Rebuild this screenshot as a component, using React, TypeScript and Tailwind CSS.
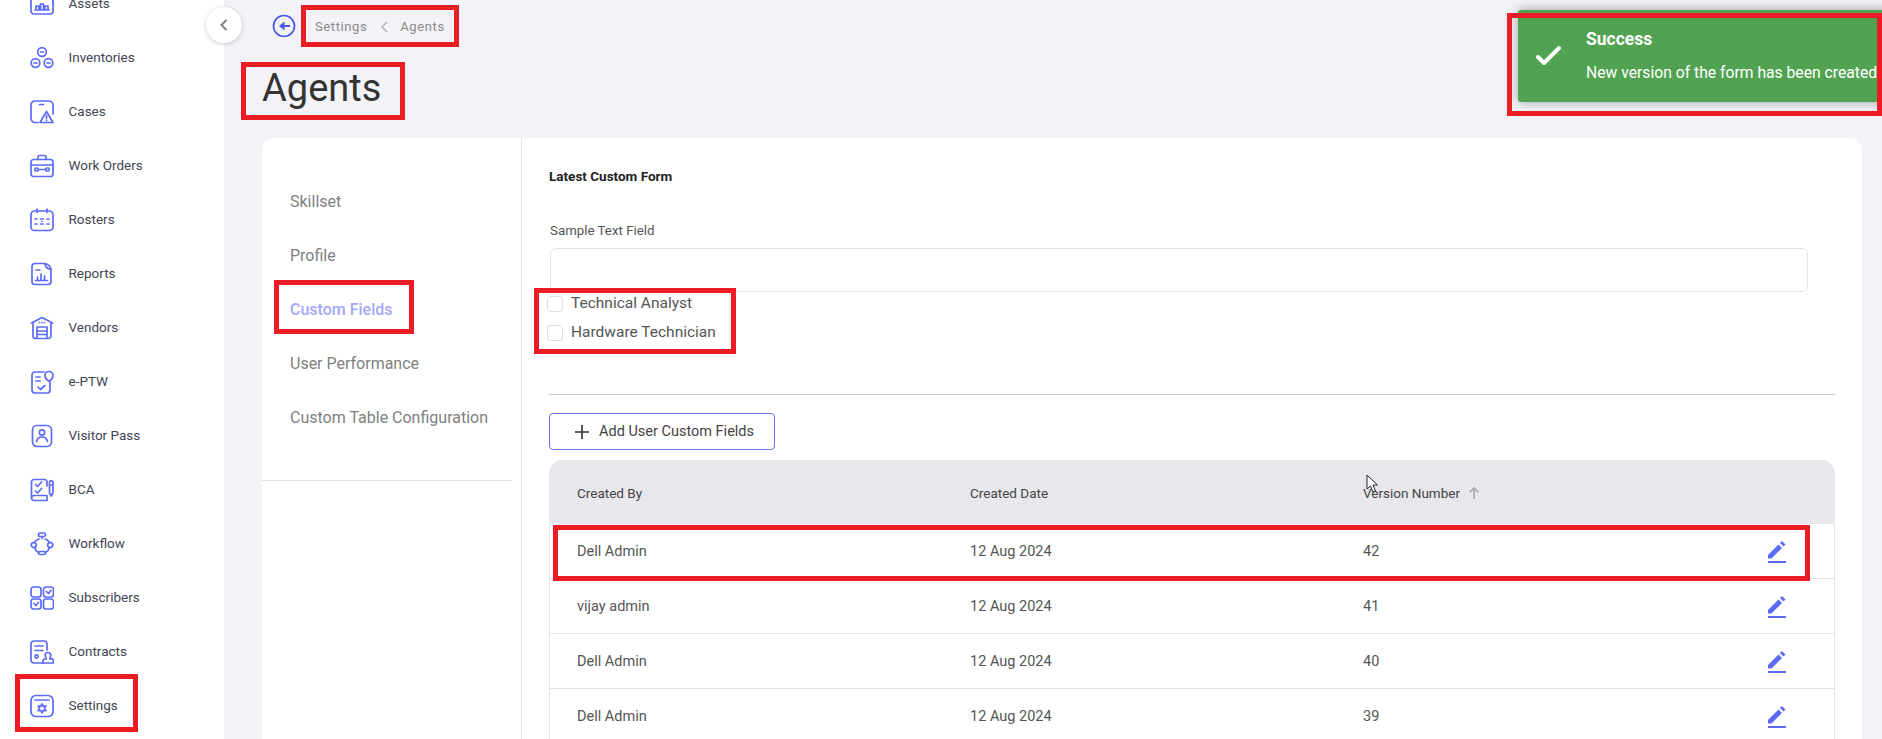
import type { ReactNode } from "react";

const ICON = "#5b6bf8";

function NavIcon({ children }: { children: ReactNode }) {
  return (
    <svg width="24" height="24" viewBox="0 0 24 24" fill="none" stroke={ICON} strokeWidth="1.700" strokeLinecap="round" strokeLinejoin="round" className="shrink-0">
      {children}
    </svg>
  );
}

const navItems: { label: string; icon: ReactNode }[] = [
  {
    label: "Assets",
    icon: (
      <>
        <rect x="1" y="1" width="22" height="21" rx="3" />
        <path d="M5 18h14M6 18v-4h3v4M10.500 18v-6h3v6M15 18v-4h3v4" />
      </>
    ),
  },
  {
    label: "Inventories",
    icon: (
      <>
        <circle cx="12" cy="6" r="4.300" />
        <circle cx="5.500" cy="17" r="4.300" />
        <circle cx="18.500" cy="17" r="4.300" />
        <path d="M10.500 6h3M4 17h3M17 17h3" />
      </>
    ),
  },
  {
    label: "Cases",
    icon: (
      <>
        <path d="M8 22.500H5a4 4 0 0 1-4-4V5a4 4 0 0 1 4-4h14a4 4 0 0 1 4 4v9" />
        <path d="M9.500 4.500h4" />
        <path d="M16.500 11.500 10 22.500h13z" />
        <path d="M16.500 15.500v3M16.500 20.300v.2" />
      </>
    ),
  },
  {
    label: "Work Orders",
    icon: (
      <>
        <rect x="1" y="5.500" width="22" height="17" rx="2.500" />
        <path d="M8 5.500V3a1.500 1.500 0 0 1 1.500-1.500h5A1.500 1.500 0 0 1 16 3v2.500" />
        <path d="M1 11h22" />
        <rect x="5" y="14" width="3" height="3" rx=".8" />
        <rect x="16" y="14" width="3" height="3" rx=".8" />
        <path d="M8 15.500h8" />
      </>
    ),
  },
  {
    label: "Rosters",
    icon: (
      <>
        <rect x="1" y="3" width="22" height="19.500" rx="3.500" />
        <path d="M7 1v3.500M17 1v3.500" />
        <path d="M5 11h2M10.500 11h2.500M17 11h2M5 16h2M10.500 16h2.500M17 16h2M11.800 13.500h.1" />
      </>
    ),
  },
  {
    label: "Reports",
    icon: (
      <>
        <path d="M15 1.500H5a3 3 0 0 0-3 3V19.500a3 3 0 0 0 3 3h13a3 3 0 0 0 3-3V7.500" />
        <path d="M15 1.500c0 3 1 5 6 6-.5-3-2.500-5-6-6z" />
        <path d="M6 8h4M5.500 18.500h12M7.500 18v-3M11 18v-6M14.500 18v-4" />
      </>
    ),
  },
  {
    label: "Vendors",
    icon: (
      <>
        <path d="M1.500 7 12 1.500 22.500 7" />
        <path d="M3 7.500V20a2.500 2.500 0 0 0 2.500 2.500h13A2.500 2.500 0 0 0 21 20V7.500" />
        <path d="M7 22v-11h10v11M7 15h10M7 18.500h10M9.500 6.500h.1M12 6.500h.1M14.500 6.500h.1" />
      </>
    ),
  },
  {
    label: "e-PTW",
    icon: (
      <>
        <path d="M14 2H5a3 3 0 0 0-3 3v15a3 3 0 0 0 3 3h12a3 3 0 0 0 3-3v-8" />
        <path d="M6 7h4M6 11h4M8 17l2.500 2.500L15 15.500" />
        <path d="M19 1.500a4 4 0 0 1 4 4c0 2.500-2 4.500-4 6-2-1.500-4-3.500-4-6a4 4 0 0 1 4-4z" />
      </>
    ),
  },
  {
    label: "Visitor Pass",
    icon: (
      <>
        <rect x="2.500" y="1.500" width="19" height="21" rx="4.500" />
        <circle cx="12" cy="8.500" r="2.600" />
        <path d="M6.500 17.500c.5-3 2.500-4.500 5.500-4.500s5 1.500 5.500 4.500" />
      </>
    ),
  },
  {
    label: "BCA",
    icon: (
      <>
        <path d="M17 8V4a2.500 2.500 0 0 0-2.500-2.500H4A2.500 2.500 0 0 0 1.500 4V20" />
        <path d="M5.500 6.500l2 2 4-4.500M5.500 13l2 2 4-4.500" />
        <path d="M1.500 20a2.500 2.500 0 0 1 2.500-2.500h13v5H4A2.500 2.500 0 0 1 1.500 20z" />
        <path d="M19.500 4a1.800 1.800 0 0 1 3.500 0v11l-1.800 3-1.700-3zM19.500 7h3.500" />
      </>
    ),
  },
  {
    label: "Workflow",
    icon: (
      <>
        <rect x="8.500" y="1" width="7" height="3.500" rx="1.700" />
        <circle cx="3.800" cy="13" r="2.500" />
        <circle cx="20.200" cy="13" r="2.500" />
        <rect x="8.500" y="19.500" width="7" height="3" rx="1.500" />
        <path d="M12 4.500v2M9 7C7 7.500 5.500 9 4.500 10.500M15 7c2 .5 3.500 2 4.500 3.500M4.500 15.500c.5 2 2 3.800 4 5M19.500 15.500c-.5 2-2 3.800-4 5" />
      </>
    ),
  },
  {
    label: "Subscribers",
    icon: (
      <>
        <rect x="1" y="1" width="10" height="10" rx="2.500" />
        <rect x="13.500" y="1" width="10" height="10" rx="2.500" />
        <rect x="1" y="13" width="10" height="10" rx="2.500" />
        <rect x="13.500" y="13" width="10" height="10" rx="2.500" />
        <path d="M16.500 5.500l2 2 2.500-3M4 17.500l2 2 2.500-3" />
      </>
    ),
  },
  {
    label: "Contracts",
    icon: (
      <>
        <path d="M13 23H4a3 3 0 0 1-3-3V4a3 3 0 0 1 3-3h10a3 3 0 0 1 3 3v6" />
        <path d="M5 6h8M5 10.500h8" />
        <circle cx="6.500" cy="16.500" r="1.600" />
        <path d="M18 12.500a2.800 2.800 0 0 1 2.800 2.800c0 1.500-1 2-1 3.500h1.700a2 2 0 0 1 2 2V23H13v-2a2 2 0 0 1 2-2h1.200c0-1.500-1-2-1-3.700a2.800 2.800 0 0 1 2.800-2.800z" />
      </>
    ),
  },
  {
    label: "Settings",
    icon: (
      <>
        <rect x="1" y="1.500" width="22" height="21" rx="5" />
        <path d="M5 6h14" />
        <path d="M12 9.500l4.200 7.300H7.800zM12 19.300 7.800 12h8.400z" strokeWidth="1.300" />
      </>
    ),
  },
];

const tabs = ["Skillset", "Profile", "Custom Fields", "User Performance", "Custom Table Configuration"];

const rows = [
  { by: "Dell Admin", date: "12 Aug 2024", version: "42" },
  { by: "vijay admin", date: "12 Aug 2024", version: "41" },
  { by: "Dell Admin", date: "12 Aug 2024", version: "40" },
  { by: "Dell Admin", date: "12 Aug 2024", version: "39" },
];

function EditIcon() {
  return (
    <svg width="18" height="22" viewBox="0 0 18 22" fill={ICON}>
      <rect x="0" y="20" width="18" height="2" />
      <polygon points="0,17.500 0,14 10.500,3.500 14,7 3.500,17.500" />
      <polygon points="12,2 14,0 17.500,3.500 15.500,5.500" />
    </svg>
  );
}

// red annotation frames drawn on top of the screenshot
function RedBox({ className }: { className: string }) {
  return <div className={`absolute border-[5px] border-[#ed1c24] pointer-events-none ${className}`} />;
}

export default function App() {
  return (
    <div className="relative flex h-[739px] w-[1882px] overflow-hidden bg-[#f2f2f7] font-['Roboto',sans-serif]">
      {/* sidebar */}
      <aside className="w-[224px] shrink-0 bg-white">
        <ul className="-mt-[23px] pl-[30px]">
          {navItems.map((item) => (
            <li key={item.label} className="flex h-[54px] items-center gap-[14.500px] text-[13.500px] text-[#444455]">
              <NavIcon>{item.icon}</NavIcon>
              <span className="-mt-[2px]">{item.label}</span>
            </li>
          ))}
        </ul>
      </aside>

      {/* main */}
      <main className="min-w-0 flex-1">
        <div className="flex h-[50px] items-center pl-[48px] pt-[2px]">
          <svg width="24" height="24" viewBox="0 0 24 24" fill="none" className="shrink-0">
            <circle cx="12" cy="12" r="10.500" stroke="#4a58e8" strokeWidth="1.700" />
            <path d="M18 12H11" stroke="#4a58e8" strokeWidth="2" />
            <path d="M12.500 7.500 7 12l5.500 4.500z" fill="#4a58e8" />
          </svg>
          <nav className="ml-[19px] mt-[2px] flex items-center text-[13px] tracking-[0.6px] text-[#8a8a8a]">
            <span>Settings</span>
            <svg width="10" height="14" viewBox="0 0 10 14" fill="none" stroke="#b5b5b5" strokeWidth="1.500" className="ml-[12px] mr-[11px]">
              <path d="M8 2 3 7l5 5" />
            </svg>
            <span>Agents</span>
          </nav>
        </div>
        <h1 className="ml-[38px] h-[88px] pt-[13px] text-[38px] leading-[50px] text-[#333333]">Agents</h1>

        <section className="ml-[38px] mr-[20px] flex h-[620px] rounded-t-[12px] bg-white">
          <div className="w-[260px] shrink-0 border-r border-[#e4e4e4]">
            <div className="h-[343px] w-[250px] border-b border-[#e2e2e2] pt-[37px]">
              {tabs.map((tab) => (
                <div
                  key={tab}
                  className={`flex h-[54px] items-center pl-[28px] text-[16px] ${
                    tab === "Custom Fields" ? "font-medium text-[#a3a8fb]" : "text-[#808080]"
                  }`}
                >
                  {tab}
                </div>
              ))}
            </div>
          </div>

          <div className="min-w-0 flex-1 px-[27px]">
            <h2 className="pt-[29px] text-[13.500px] font-bold leading-[18px] text-[#222222]">Latest Custom Form</h2>
            <label className="ml-px mt-[37px] block text-[13.300px] leading-[18px] text-[#555555]">Sample Text Field</label>
            <div className="ml-px mt-[8px] h-[44px] w-[1258px] rounded-[6px] border border-[#e2e2ea]" />
            <div className="-ml-[2px] mt-[4px] flex flex-col gap-[13px]">
              {["Technical Analyst", "Hardware Technician"].map((name) => (
                <label key={name} className="flex h-[16px] items-center gap-[8px] text-[15.500px] text-[#555555]">
                  <span className="h-[16px] w-[16px] rounded-[3px] border border-[#dedee4] bg-white" />
                  {name}
                </label>
              ))}
            </div>
            <hr className="mt-[53px] border-[#c9c9c9]" />
            <button className="mt-[18px] flex h-[37px] w-[226px] items-center rounded-[4px] border border-[#6a74f0] pl-[25px] text-[14.500px] text-[#444444]">
              <svg width="14" height="14" viewBox="0 0 14 14" stroke="#333333" strokeWidth="1.600" className="mr-[10px]">
                <path d="M7 0v14M0 7h14" />
              </svg>
              Add User Custom Fields
            </button>

            <div className="mt-[10px]">
              <div className="grid h-[64px] grid-cols-[393px_393px_1fr] items-center rounded-t-[14px] bg-[#e7e7ec] pl-[28px] pt-[2px] text-[13.500px] text-[#444444]">
                <span>Created By</span>
                <span>Created Date</span>
                <span className="flex items-center gap-[7px]">
                  Version Number
                  <svg width="14" height="14" viewBox="0 0 14 14" fill="none" stroke="#aaaaaa" strokeWidth="1.700">
                    <path d="M7 13V2M2.500 6.500 7 2l4.500 4.500" />
                  </svg>
                </span>
              </div>
              {rows.map((row) => (
                <div
                  key={row.version}
                  className="grid h-[55px] grid-cols-[393px_393px_1fr] items-center border-x border-b border-[#e2e2e2] pl-[27px] pt-[2px] text-[14.500px] text-[#555555]"
                >
                  <span>{row.by}</span>
                  <span>{row.date}</span>
                  <span className="flex items-center justify-between pr-[48px]">
                    {row.version}
                    <EditIcon />
                  </span>
                </div>
              ))}
            </div>
          </div>
        </section>
      </main>

      {/* collapse button */}
      <button className="absolute left-[206px] top-[7px] flex h-[36px] w-[36px] items-center justify-center rounded-full bg-white shadow-[0_1px_4px_rgba(0,0,0,0.2)]">
        <svg width="12" height="14" viewBox="0 0 12 14" fill="none" stroke="#808080" strokeWidth="2">
          <path d="M8.500 2 3.500 7l5 5" />
        </svg>
      </button>

      {/* toast */}
      <div className="absolute left-[1518px] top-[10px] flex h-[92px] w-[380px] items-center rounded-[3px] bg-[#51a351] text-white shadow-[0_0_12px_rgba(0,0,0,0.35)]">
        <svg width="28" height="22" viewBox="0 0 28 22" fill="none" stroke="white" strokeWidth="4" strokeLinecap="round" strokeLinejoin="round" className="ml-[17px] shrink-0">
          <path d="M3 12l6 6L24 3" />
        </svg>
        <div className="ml-[23px]">
          <div className="text-[17.500px] font-bold leading-[20px]">Success</div>
          <div className="mt-[14px] whitespace-nowrap text-[15.700px] leading-[20px]">New version of the form has been created</div>
        </div>
      </div>

      {/* mouse pointer */}
      <svg width="14" height="20" viewBox="0 0 14 20" fill="white" stroke="#222222" strokeWidth="1" className="absolute left-[1366px] top-[474px]">
        <path d="M1 1v14l3.500-3 2.500 6 2.500-1-2.500-6h4.500z" />
      </svg>

      {/* annotations */}
      <RedBox className="left-[301px] top-[5px] h-[42px] w-[158px]" />
      <RedBox className="left-[241px] top-[62px] h-[58px] w-[164px]" />
      <RedBox className="left-[274px] top-[280px] h-[54px] w-[140px]" />
      <RedBox className="left-[534px] top-[288px] h-[66px] w-[202px]" />
      <RedBox className="left-[553px] top-[525px] h-[56px] w-[1257px]" />
      <RedBox className="left-[15px] top-[674px] h-[58px] w-[123px]" />
      <RedBox className="left-[1507px] top-[13px] h-[103px] w-[375px]" />
    </div>
  );
}
